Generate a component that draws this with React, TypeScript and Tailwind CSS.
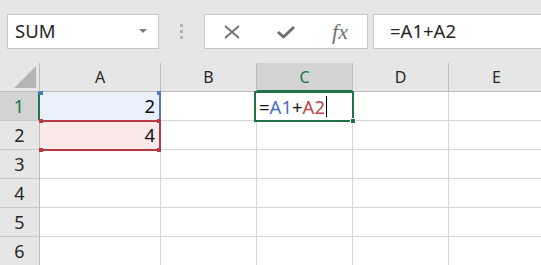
import React from "react";

const font = { fontFamily: '"Noto Sans", "Open Sans", sans-serif' };

function Corner() {
  return (
    <div className="relative bg-[#e6e6e6] border-r border-b border-[#bdbdbd]">
      <svg className="absolute right-[3px] bottom-[3px]" width="22" height="22" viewBox="0 0 22 22">
        <polygon points="22,0 22,22 0,22" fill="#b5b5b5" />
      </svg>
    </div>
  );
}

export default function App() {
  const cols = ["A", "B", "C", "D", "E"];
  const rows = [1, 2, 3, 4, 5, 6];
  return (
    <div className="w-[541px] h-[265px] overflow-hidden bg-white" style={font}>
      {/* Toolbar */}
      <div className="h-[63px] bg-[#e6e6e6] flex items-start pt-[14px] pl-[7px]">
        <div className="w-[152px] h-[35px] bg-white border border-[#c6c6c6] flex items-center justify-between pl-[7px] pr-[11px]">
          <span className="text-[18.5px] text-[#262626] leading-none">SUM</span>
          <svg width="8" height="5" viewBox="0 0 8 5">
            <polygon points="0,0 8,0 4,4" fill="#7a7a7a" />
          </svg>
        </div>
        <div className="w-[45px] h-[35px] flex flex-col items-center justify-center gap-[3px]">
          <div className="w-[3px] h-[3px] bg-[#b3b3b3]" />
          <div className="w-[3px] h-[3px] bg-[#b3b3b3]" />
          <div className="w-[3px] h-[3px] bg-[#b3b3b3]" />
        </div>
        <div className="w-[164px] h-[35px] bg-white border border-[#c6c6c6] flex items-center">
          <div className="w-[54px] flex justify-center">
            <svg width="18" height="14" viewBox="0 0 18 14">
              <path d="M2 1 L16 13 M16 1 L2 13" stroke="#6e6e6e" strokeWidth="1.8" fill="none" />
            </svg>
          </div>
          <div className="w-[54px] flex justify-center">
            <svg width="20" height="14" viewBox="0 0 20 14">
              <path d="M2 7 L7.5 12 L18 2" stroke="#6e6e6e" strokeWidth="3" fill="none" strokeLinejoin="round" />
            </svg>
          </div>
          <div className="w-[54px] flex justify-center">
            <span className="text-[22px] italic text-[#707070] leading-none" style={{ fontFamily: '"Liberation Serif", serif' }}>
              fx
            </span>
          </div>
        </div>
        <div className="ml-[5px] flex-1 h-[35px] bg-white border border-r-0 border-[#c6c6c6] flex items-center pl-[16px]">
          <span className="text-[18.5px] text-[#262626] leading-none">=A1+A2</span>
        </div>
      </div>

      {/* Sheet */}
      <div className="relative grid grid-cols-[40px_121px_96px_96px_96px_96px] auto-rows-[29px]">
        <Corner />
        {cols.map((c) => {
          const sel = c === "C";
          return (
            <div
              key={c}
              className={
                sel
                  ? "bg-[#d3d3d3] border-r border-[#bdbdbd] border-b-2 border-b-[#217346] flex items-center justify-center text-[16px] text-[#217346]"
                  : "bg-[#e6e6e6] border-r border-b border-[#bdbdbd] flex items-center justify-center text-[16px] text-[#262626]"
              }
            >
              {c}
            </div>
          );
        })}
        {rows.map((r) => (
          <React.Fragment key={r}>
            <div
              className={
                r === 1
                  ? "bg-[#d3d3d3] border-r-2 border-r-[#217346] border-b border-b-[#c8c8c8] flex items-center justify-center text-[18px] text-[#217346]"
                  : "bg-[#e6e6e6] border-r border-r-[#bdbdbd] border-b border-b-[#c8c8c8] flex items-center justify-center text-[18px] text-[#262626]"
              }
            >
              {r}
            </div>
            {cols.map((c) => {
              let bg = "bg-white";
              let content: React.ReactNode = null;
              if (c === "A" && r === 1) {
                bg = "bg-[#e9f0fa]";
                content = "2";
              }
              if (c === "A" && r === 2) {
                bg = "bg-[#fbe9ea]";
                content = "4";
              }
              return (
                <div
                  key={c}
                  className={`${bg} border-r border-b border-[#d6d6d6] flex items-center justify-end pr-[5px] text-[18.5px] text-[#111111]`}
                >
                  {content}
                </div>
              );
            })}
          </React.Fragment>
        ))}

        {/* A1 reference highlight (blue) */}
        <div className="absolute left-[40px] top-[29px] w-[121px] h-[30px] border-r-2 border-[#4f7bbf] pointer-events-none" />
        <div className="absolute left-[39px] top-[28px] w-[4px] h-[4px] bg-[#4f7bbf]" />
        <div className="absolute left-[157px] top-[28px] w-[4px] h-[4px] bg-[#4f7bbf]" />

        {/* A2 reference highlight (red) */}
        <div className="absolute left-[40px] top-[57px] w-[121px] h-[31px] border-y-2 border-r-2 border-[#b8393f] pointer-events-none" />
        <div className="absolute left-[39px] top-[56px] w-[4px] h-[4px] bg-[#b8393f]" />
        <div className="absolute left-[157px] top-[56px] w-[4px] h-[4px] bg-[#b8393f]" />
        <div className="absolute left-[39px] top-[85px] w-[4px] h-[4px] bg-[#b8393f]" />
        <div className="absolute left-[157px] top-[85px] w-[4px] h-[4px] bg-[#b8393f]" />

        {/* Active cell C1 */}
        <div className="absolute left-[254px] top-[28px] w-[100px] h-[31px] border-2 border-[#217346] bg-white flex items-center pl-[3px] text-[18.5px]">
          <span className="text-[#111111]">=</span>
          <span className="text-[#4472c4]">A1</span>
          <span className="text-[#111111]">+</span>
          <span className="text-[#c0474c]">A2</span>
          <span className="w-[1px] h-[21px] bg-black ml-[1px]" />
        </div>
        <div className="absolute left-[350px] top-[55px] w-[6px] h-[6px] bg-[#217346] border border-white" />
      </div>
    </div>
  );
}
